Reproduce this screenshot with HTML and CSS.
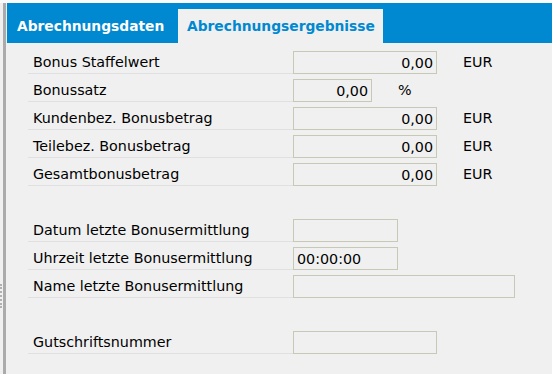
FILE: index.html
```html
<!DOCTYPE html>
<html lang="de">
  <head>
    <meta charset="UTF-8" />
    <meta name="viewport" content="width=device-width, initial-scale=1.0" />
    <title>Abrechnungsergebnisse</title>
    <link rel="stylesheet" href="styles.css">
  </head>
  <body>
    <div class="window">
      <div class="splitter"></div>
      <div class="main">
        <ul class="tabs">
          <li class="tab tab-data">Abrechnungsdaten</li>
          <li class="tab tab-results active">Abrechnungsergebnisse</li>
        </ul>

        <div class="form">
          <div class="row">
            <label class="label">Bonus Staffelwert</label>
            <div class="field w-md num">0,00</div>
            <span class="unit">EUR</span>
          </div>
          <div class="row">
            <label class="label">Bonussatz</label>
            <div class="field w-xs num">0,00</div>
            <span class="unit">%</span>
          </div>
          <div class="row">
            <label class="label">Kundenbez. Bonusbetrag</label>
            <div class="field w-md num">0,00</div>
            <span class="unit">EUR</span>
          </div>
          <div class="row">
            <label class="label">Teilebez. Bonusbetrag</label>
            <div class="field w-md num">0,00</div>
            <span class="unit">EUR</span>
          </div>
          <div class="row">
            <label class="label">Gesamtbonusbetrag</label>
            <div class="field w-md num">0,00</div>
            <span class="unit">EUR</span>
          </div>

          <div class="row empty"></div>

          <div class="row">
            <label class="label">Datum letzte Bonusermittlung</label>
            <div class="field w-sm"></div>
          </div>
          <div class="row">
            <label class="label">Uhrzeit letzte Bonusermittlung</label>
            <div class="field w-sm">00:00:00</div>
          </div>
          <div class="row">
            <label class="label">Name letzte Bonusermittlung</label>
            <div class="field w-lg"></div>
          </div>

          <div class="row empty"></div>

          <div class="row">
            <label class="label">Gutschriftsnummer</label>
            <div class="field w-md"></div>
          </div>
        </div>
      </div>
    </div>
  </body>
</html>
```

FILE: styles.css
```css
* {
  margin: 0;
  padding: 0;
  box-sizing: border-box;
}

body {
  background: #fbfbfb;
  font-family: "DejaVu Sans", Verdana, sans-serif;
  font-size: 14.3px;
  color: #000;
}

.window {
  margin-top: 3px;
  height: 371px;
  display: flex;
  background: #f0f0f0;
  padding-left: 3px;
}

.splitter {
  position: relative;
  width: 3px;
  background: #ababab;
}

.splitter::before {
  content: "";
  position: absolute;
  left: -3px;
  top: 281px;
  height: 24px;
  border-left: 2px dotted #b0b0b0;
}

.main {
  flex: 1;
  margin-left: 1px;
}

.tabs {
  display: flex;
  align-items: flex-end;
  height: 40px;
  background: #0088d1;
  list-style: none;
}

.tab {
  height: 34px;
  line-height: 35px;
  font-weight: bold;
  font-size: 13.8px;
  white-space: nowrap;
}

.tab-data {
  width: 171px;
  padding-left: 10px;
  color: #fff;
}

.tab-results {
  width: 205px;
  padding-left: 9px;
}

.tab.active {
  background: #f0f0f0;
  color: #0088d1;
}

.form {
  padding: 3px 0 0 21px;
}

.row {
  display: flex;
  align-items: flex-end;
  height: 28px;
}

.label {
  width: 265px;
  height: 23px;
  line-height: 23px;
  padding-left: 5px;
  border-bottom: 1px solid #e0e0e0;
  white-space: nowrap;
}

.field {
  height: 23px;
  line-height: 22px;
  padding: 0 3px;
  border: 1px solid #c8c8b6;
  white-space: nowrap;
}

.num {
  text-align: right;
}

.w-xs {
  width: 79px;
}

.w-sm {
  width: 105px;
}

.w-md {
  width: 144px;
}

.w-lg {
  width: 222px;
}

.unit {
  height: 23px;
  line-height: 23px;
  margin-left: 26px;
}
```
